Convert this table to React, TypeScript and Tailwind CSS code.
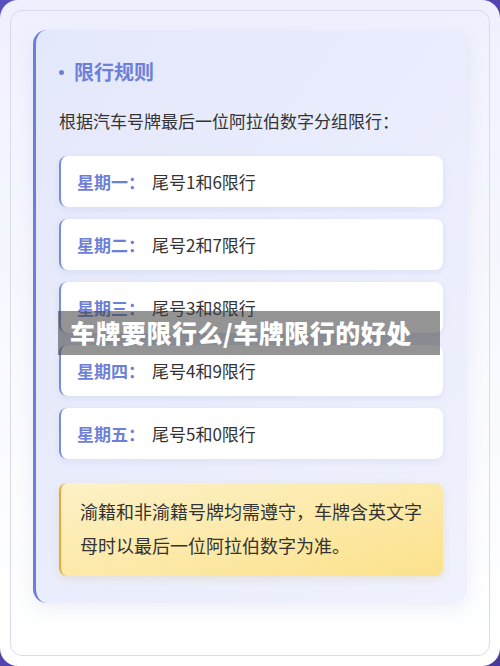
const rules = [
  { day: "星期一", tail: "尾号1和6限行" },
  { day: "星期二", tail: "尾号2和7限行" },
  { day: "星期三", tail: "尾号3和8限行" },
  { day: "星期四", tail: "尾号4和9限行" },
  { day: "星期五", tail: "尾号5和0限行" },
];

export default function App() {
  return (
    <div
      className="relative h-[666px] w-[500px] overflow-hidden bg-gradient-to-br from-[#5a4fc0] to-[#4a3a9c]"
      style={{ fontFamily: '"Noto Sans CJK SC", "Noto Sans", sans-serif' }}
    >
      <div className="h-[666px] rounded-[18px] bg-gradient-to-b from-[#eef0fd] via-[#f8f9fe] to-white p-[10px]">
        <div className="h-[646px] rounded-[12px] border border-[#d7dbef] px-[22px] pt-[19px]">
          <section className="rounded-[14px] border-l-[3px] border-[#6c7fd8] bg-gradient-to-br from-[#e4e8fb] to-[#eff1fd] pb-[27px] pl-[23px] pr-[24px] pt-[28px] shadow-[0_6px_16px_rgba(120,130,200,0.12)]">
            <h2 className="flex h-[28px] items-center text-[20px] font-bold text-[#6d80d8]">
              <span className="mr-[10px] h-[5px] w-[5px] rounded-full bg-[#6d80d8]" />
              限行规则
            </h2>
            <p className="mt-[22px] text-[17px] leading-[26px] text-[#333]">
              根据汽车号牌最后一位阿拉伯数字分组限行：
            </p>
            <div className="mt-[22px] flex flex-col gap-[12px]">
              {rules.map((r) => (
                <div
                  key={r.day}
                  className="flex h-[51px] items-center rounded-[8px] border-l-2 border-[#7b8cdc] bg-white pl-[16px] shadow-[0_2px_6px_rgba(110,120,190,0.12)]"
                >
                  <span className="w-[75px] text-[17px] font-bold text-[#6d80d8]">{r.day}：</span>
                  <span className="text-[17px] text-[#333]">{r.tail}</span>
                </div>
              ))}
            </div>
            <div className="mt-[24px] rounded-[8px] border-l-2 border-[#e9a93a] bg-gradient-to-br from-[#fdf1c6] to-[#fce28c] px-[19px] pb-[14px] pt-[11px] text-[18px] leading-[34px] text-[#333] shadow-[0_3px_8px_rgba(200,170,80,0.2)]">
              渝籍和非渝籍号牌均需遵守，车牌含英文字母时以最后一位阿拉伯数字为准。
            </div>
          </section>
        </div>
      </div>
      <div className="absolute left-[58px] top-[311px] flex h-[44px] w-[382px] items-center bg-[rgba(60,60,60,0.55)] pl-[12px] text-[25px] font-black tracking-[0.5px] text-white">
        车牌要限行么/车牌限行的好处
      </div>
    </div>
  );
}
